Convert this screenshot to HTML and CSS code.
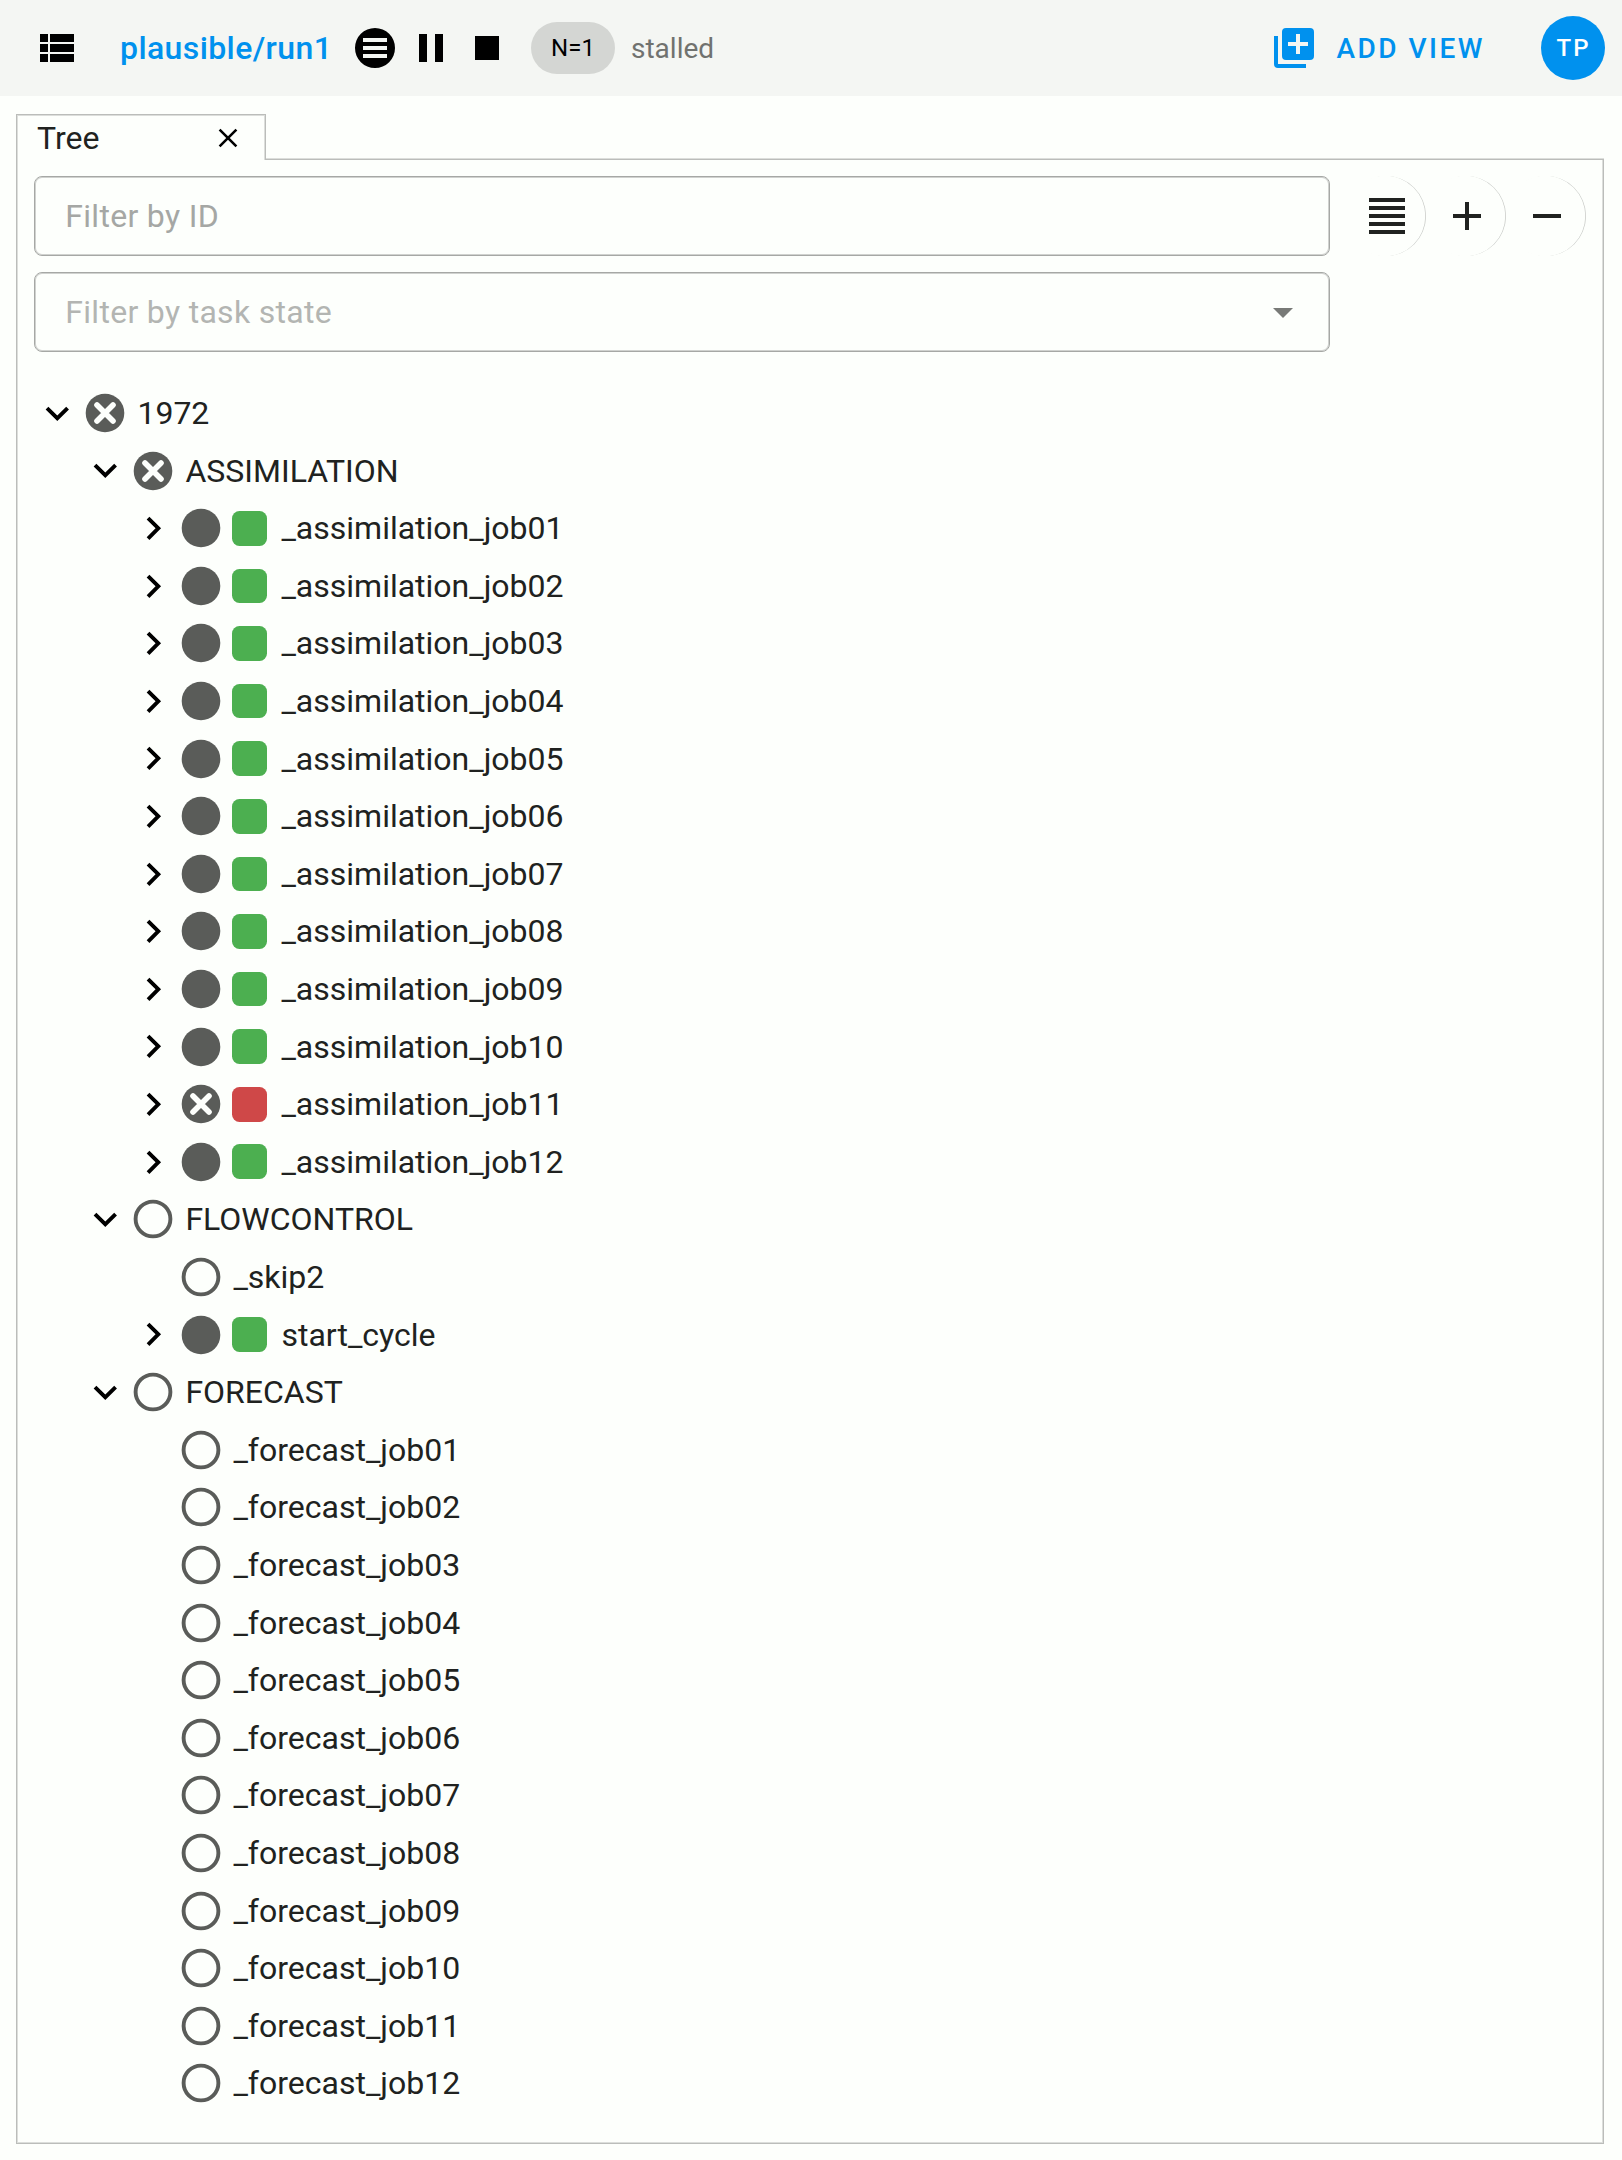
FILE: index.html
```html
<!DOCTYPE html>
<html lang="en">
<head>
<meta charset="utf-8">
<title>plausible/run1</title>
<link rel="stylesheet" href="styles.css">
</head>
<body>
<svg class="defs" aria-hidden="true">
  <symbol id="list" viewBox="0 0 24 24"><path d="M9,5V9H21V5M9,19H21V15H9M9,14H21V10H9M4,9H8V5H4M4,19H8V15H4M4,14H8V10H4V14Z"/></symbol>
  <symbol id="menu" viewBox="0 0 24 24"><path fill-rule="evenodd" d="M12,2A10,10 0 0,0 2,12A10,10 0 0,0 12,22A10,10 0 0,0 22,12A10,10 0 0,0 12,2M6,7H18V9H6ZM6,11H18V13H6ZM6,15H18V17H6Z"/></symbol>
  <symbol id="pause" viewBox="0 0 24 24"><path d="M14,19H18V5H14M6,19H10V5H6V19Z"/></symbol>
  <symbol id="stop" viewBox="0 0 24 24"><path d="M18,18H6V6H18V18Z"/></symbol>
  <symbol id="addview" viewBox="0 0 24 24"><path d="M19,11H15V15H13V11H9V9H13V5H15V9H19M20,2H8A2,2 0 0,0 6,4V16A2,2 0 0,0 8,18H20A2,2 0 0,0 22,16V4A2,2 0 0,0 20,2M4,6H2V20A2,2 0 0,0 4,22H18V20H4V6Z"/></symbol>
  <symbol id="lines" viewBox="0 0 24 24"><path d="M3,3H21V5H3V3M3,7H21V9H3V7M3,11H21V13H3V11M3,15H21V17H3V15M3,19H21V21H3V19Z"/></symbol>
  <symbol id="plus" viewBox="0 0 24 24"><path d="M19,13H13V19H11V13H5V11H11V5H13V11H19V13Z"/></symbol>
  <symbol id="minus" viewBox="0 0 24 24"><path d="M19,13H5V11H19V13Z"/></symbol>
  <symbol id="arrow" viewBox="0 0 24 24"><path d="M7,10L12,15L17,10H7Z"/></symbol>
  <symbol id="down" viewBox="0 0 24 24"><path d="M7.41,8.58L12,13.17L16.59,8.58L18,10L12,16L6,10L7.41,8.58Z"/></symbol>
  <symbol id="right" viewBox="0 0 24 24"><path d="M8.59,16.58L13.17,12L8.59,7.41L10,6L16,12L10,18L8.59,16.58Z"/></symbol>
  <symbol id="waiting" viewBox="0 0 40 40"><circle cx="20" cy="20" r="17.4" fill="none" stroke="#5a5c59" stroke-width="3.9"/></symbol>
  <symbol id="done" viewBox="0 0 40 40"><circle cx="20" cy="20" r="19.3" fill="#5a5c59"/></symbol>
  <symbol id="failed" viewBox="0 0 40 40"><circle cx="20" cy="20" r="19.3" fill="#5a5c59"/><path d="M12,12L28,28M28,12L12,28" stroke="#fdfffc" stroke-width="5.6" stroke-linecap="round"/></symbol>
</svg>
<header class="toolbar">
  <svg class="icon"><use href="#list"/></svg>
  <h1 class="title">plausible/run1</h1>
  <div class="controls">
    <svg class="icon"><use href="#menu"/></svg>
    <svg class="icon"><use href="#pause"/></svg>
    <svg class="icon"><use href="#stop"/></svg>
  </div>
  <span class="chip">N=1</span>
  <span class="status">stalled</span>
  <div class="add-view"><svg class="icon"><use href="#addview"/></svg><span>ADD VIEW</span></div>
  <div class="avatar">TP</div>
</header>
<main class="dock">
  <div class="tabs">
    <div class="tab"><span>Tree</span><svg class="close" viewBox="0 0 20 20"><path d="M1.6,1.6L18.4,18.4M18.4,1.6L1.6,18.4"/></svg></div>
    <div class="tab-rest"></div>
  </div>
  <section class="panel">
    <div class="filters">
      <div class="fields">
        <div class="field">Filter by ID</div>
        <div class="field select"><span>Filter by task state</span><svg class="icon"><use href="#arrow"/></svg></div>
      </div>
      <div class="buttons">
        <div class="round"><svg class="icon"><use href="#lines"/></svg></div>
        <div class="round"><svg class="icon"><use href="#plus"/></svg></div>
        <div class="round"><svg class="icon"><use href="#minus"/></svg></div>
      </div>
    </div>
    <ul class="tree" id="tree"></ul>
  </section>
</main>
<script src="tree.js"></script>
</body>
</html>
```
FILE: styles.css
```css
* { box-sizing: border-box; }
body {
  margin: 0;
  width: 1622px;
  height: 2160px;
  display: flex;
  flex-direction: column;
  overflow: hidden;
  background: #fdfffc;
  color: #202220;
  font-family: Roboto, "Liberation Sans", sans-serif;
  font-size: 32px;
}
.defs { display: none; }
.icon { width: 48px; height: 48px; flex: none; display: block; }
.toolbar {
  height: 96px;
  flex: none;
  display: flex;
  align-items: center;
  padding: 0 17px 0 32px;
  background: #f4f6f3;
  color: #000;
}
.title {
  margin: 0 0 0 40px;
  width: 230.5px;
  font-size: 32px;
  font-weight: 500;
  letter-spacing: 0.4px;
  color: #0091ee;
  white-space: nowrap;
}
.controls { display: flex; gap: 8px; }
.chip {
  width: 84px;
  height: 52px;
  margin-left: 20.5px;
  border-radius: 26px;
  background: #d4d6d3;
  font-size: 24px;
  line-height: 52px;
  text-align: center;
}
.status { margin-left: 16px; font-size: 28px; color: #70726f; }
.add-view {
  margin-left: auto;
  display: flex;
  align-items: center;
  gap: 18px;
  color: #0091ee;
  font-size: 28px;
  font-weight: 500;
  letter-spacing: 2.5px;
}
.add-view .icon, .controls .icon, .tree .icon, .round .icon { fill: currentColor; }
.avatar {
  width: 64px;
  height: 64px;
  margin-left: 56px;
  padding-left: 1px;
  border-radius: 50%;
  background: #0091ee;
  color: #fff;
  font-size: 24px;
  font-weight: 500;
  line-height: 64px;
  letter-spacing: 2px;
  text-align: center;
}
.dock { flex: 1; display: flex; flex-direction: column; margin: 18px 18px 16px 16px; }
.tabs { display: flex; height: 46px; flex: none; }
.tab {
  width: 250px;
  display: flex;
  align-items: center;
  justify-content: space-between;
  padding: 0 27px 0 20px;
  border: 1px solid #bbbdba;
  border-bottom: 0;
  box-shadow: inset 1px 1px 0 #dcdedb, inset -1px 0 0 #dcdedb;
}
.close { width: 20px; height: 20px; fill: none; stroke: #000; stroke-width: 2.6; }
.tab-rest { flex: 1; border-bottom: 1px solid #bbbdba; box-shadow: inset 0 -1px 0 #dcdedb; }
.panel {
  flex: 1;
  border: 1px solid #bbbdba;
  border-top: 0;
  box-shadow: inset 1px 0 0 #dcdedb, inset -1px -1px 0 #dcdedb;
  padding: 16px 17px;
}
.filters { display: flex; gap: 16px; }
.fields { width: 1297px; display: flex; flex-direction: column; gap: 16px; }
.field {
  height: 80px;
  display: flex;
  align-items: center;
  justify-content: space-between;
  padding: 0 22.5px 0 30.3px;
  border: 1px solid #a6a8a5;
  box-shadow: inset 0 0 0 1px #d0d2cf;
  border-radius: 8px;
  color: #a5a7a4;
  letter-spacing: 0.3px;
}
.select { color: #b3b5b2; }
.select .icon { fill: #787a77; }
.buttons { display: flex; }
.round {
  width: 80px;
  height: 80px;
  display: flex;
  align-items: center;
  justify-content: center;
  padding-left: 1.4px;
  border-radius: 50%;
  box-shadow: inset -1px 0 0 -0.3px #c4c6c3;
}
.tree { list-style: none; margin: 32.3px 0 0 -0.6px; padding: 0; }
.row { display: flex; align-items: center; height: 57.6px; white-space: nowrap; }
.slot { width: 48px; flex: none; display: flex; justify-content: center; }
.slot .icon { width: 46.6px; height: 46.6px; color: #000; }
.slot .task { width: 40px; height: 40px; }
.indent-0 { padding-left: 0; }
.indent-1 { padding-left: 48px; }
.indent-2 { padding-left: 96px; }
.job { width: 34.7px; height: 34.7px; border-radius: 7.5px; background: #4caf50; }
.job.bad { background: #cf4848; }
.name { margin-left: 8px; }
```
FILE: tree.js
```js
const pad = n => String(n).padStart(2, '0');
const range = [...Array(12).keys()].map(i => i + 1);

// [indent, chevron, task state, job state, name]
const rows = [
  [0, 'down', 'failed', '', '1972'],
  [1, 'down', 'failed', '', 'ASSIMILATION'],
  ...range.map(n => n === 11
    ? [2, 'right', 'failed', 'bad', '_assimilation_job11']
    : [2, 'right', 'done', 'ok', '_assimilation_job' + pad(n)]),
  [1, 'down', 'waiting', '', 'FLOWCONTROL'],
  [2, '', 'waiting', '', '_skip2'],
  [2, 'right', 'done', 'ok', 'start_cycle'],
  [1, 'down', 'waiting', '', 'FORECAST'],
  ...range.map(n => [2, '', 'waiting', '', '_forecast_job' + pad(n)])
];

document.getElementById('tree').innerHTML = rows.map(([indent, chevron, task, job, name]) => `
  <li class="row indent-${indent}">
    <span class="slot">${chevron ? `<svg class="icon"><use href="#${chevron}"/></svg>` : ''}</span>
    <span class="slot"><svg class="task"><use href="#${task}"/></svg></span>
    ${job ? `<span class="slot"><span class="job ${job}"></span></span>` : ''}
    <span class="name">${name}</span>
  </li>`).join('');
```
